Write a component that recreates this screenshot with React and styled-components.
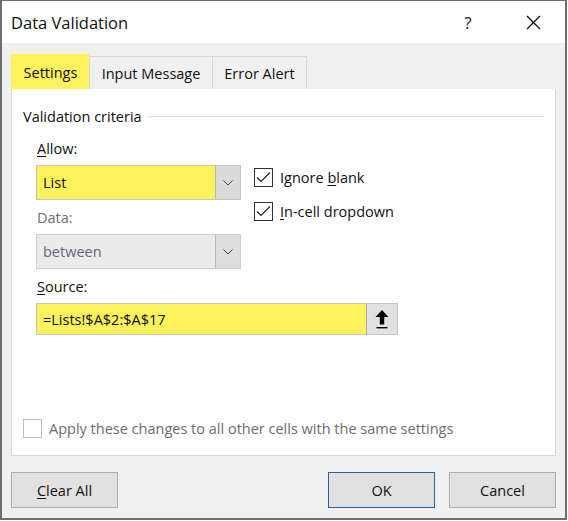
import React from "react";
import styled, { createGlobalStyle } from "styled-components";

const Global = createGlobalStyle`
  html, body { margin: 0; padding: 0; background: #ffffff; }
  body { font-family: "Open Sans", "Noto Sans", sans-serif; color: #111; }
  * { box-sizing: border-box; }
`;

const FONT = `"Open Sans", "Noto Sans", sans-serif`;

const Window = styled.div`
  width: 567px;
  height: 520px;
  border: 2px solid #6e6e6e;
  border-top-width: 1px;
  display: flex;
  flex-direction: column;
  background: #f0f0f0;
  font-family: ${FONT};
`;

const TitleBar = styled.div`
  height: 42px;
  background: #ffffff;
  display: flex;
  align-items: center;
  padding-left: 9px;
  padding-top: 1px;
`;

const Title = styled.div`
  flex: 1;
  font-size: 16.5px;
  color: #111;
`;

const TitleButton = styled.div`
  width: ${(p) => p.$w}px;
  display: flex;
  justify-content: center;
  align-items: center;
  font-size: 17px;
  color: #222;
`;

const Body = styled.div`
  flex: 1;
  display: flex;
  flex-direction: column;
  padding: 11px 9px 0 9px;
`;

const TabList = styled.div`
  display: flex;
  align-items: flex-end;
  height: 35px;
`;

const Tab = styled.div`
  width: ${(p) => p.$w}px;
  height: ${(p) => (p.$active ? 35 : 33)}px;
  display: flex;
  align-items: center;
  justify-content: center;
  font-size: 14.5px;
  color: #111;
  background: ${(p) => (p.$active ? "#fbf25c" : "#f0f0f0")};
  border: 1px solid ${(p) => (p.$active ? "#fbf25c" : "#dadada")};
  border-bottom: none;
  margin-left: ${(p) => (p.$first ? 0 : -1)}px;
`;

const Panel = styled.div`
  height: 367px;
  background: #ffffff;
  border: 1px solid #d9d9d9;
  border-top: none;
  padding: 17px 11px 0 11px;
  display: flex;
  flex-direction: column;
`;

const GroupHeader = styled.div`
  display: flex;
  align-items: center;
  gap: 6px;
  font-size: 14.5px;
  height: 20px;
  color: #111;
`;

const GroupLine = styled.div`
  flex: 1;
  height: 1px;
  background: #dcdcdc;
`;

const Criteria = styled.div`
  padding-left: 13px;
  display: flex;
  flex-direction: column;
`;

const TopRow = styled.div`
  display: flex;
  gap: 13px;
`;

const LeftCol = styled.div`
  width: 205px;
  display: flex;
  flex-direction: column;
`;

const RightCol = styled.div`
  display: flex;
  flex-direction: column;
  padding-top: 42px;
  gap: 15px;
`;

const Label = styled.div`
  font-size: 14.5px;
  height: 20px;
  line-height: 20px;
  margin-top: ${(p) => p.$mt || 0}px;
  margin-bottom: ${(p) => p.$mb || 0}px;
  padding-left: 1px;
  color: ${(p) => (p.$disabled ? "#6d6d6d" : "#111")};
`;

const U = styled.span`
  text-decoration: underline;
  text-underline-offset: 2px;
`;

const Select = styled.div`
  height: 35px;
  display: flex;
  border: 1px solid ${(p) => (p.$disabled ? "#cfcfcf" : "#c4c4c4")};
  background: ${(p) => (p.$highlight ? "#fbf25c" : p.$disabled ? "#ebebeb" : "#fff")};
`;

const SelectValue = styled.div`
  flex: 1;
  display: flex;
  align-items: center;
  padding-left: 6px;
  font-size: 14.5px;
  color: ${(p) => (p.$disabled ? "#66677a" : "#111")};
`;

const SelectButton = styled.div`
  width: 25px;
  display: flex;
  align-items: center;
  justify-content: center;
  background: ${(p) => (p.$disabled ? "#dedede" : "#dadada")};
  border-left: 1px solid #b9b9b9;
`;

const CheckRow = styled.div`
  display: flex;
  align-items: center;
  gap: 7px;
  font-size: 14.5px;
  color: ${(p) => (p.$disabled ? "#6d6d6d" : "#111")};
`;

const Box = styled.div`
  width: 19px;
  height: 19px;
  border: 1px solid ${(p) => (p.$disabled ? "#bdbdbd" : "#333")};
  background: #fff;
  display: flex;
  align-items: center;
  justify-content: center;
`;

const SourceRow = styled.div`
  display: flex;
  width: 362px;
  height: 32px;
  border: 1px solid #c4c4c4;
  background: #fbf25c;
`;

const SourceInput = styled.div`
  flex: 1;
  display: flex;
  align-items: center;
  padding-left: 6px;
  font-size: 14.5px;
  color: #111;
`;

const RefButton = styled.div`
  width: 31px;
  display: flex;
  align-items: center;
  justify-content: center;
  background: #e1e1e1;
  border-left: 1px solid #adadad;
`;

const ApplyRow = styled.div`
  margin-top: auto;
  margin-bottom: 17px;
`;

const Footer = styled.div`
  display: flex;
  padding-top: 16px;
  gap: 14px;
`;

const Button = styled.div`
  width: 107px;
  height: 36px;
  display: flex;
  align-items: center;
  justify-content: center;
  font-size: 14.5px;
  color: #111;
  background: #e1e1e1;
  border: 1px solid ${(p) => (p.$default ? "#2a5f98" : "#adadad")};
  margin-left: ${(p) => (p.$push ? "auto" : "0")};
`;

const Chevron = () => (
  <svg width="10" height="6" viewBox="0 0 10 6">
    <polyline points="0.5,0.5 5,5 9.5,0.5" fill="none" stroke="#444" strokeWidth="1" />
  </svg>
);

const Check = () => (
  <svg width="15" height="13" viewBox="0 0 15 13">
    <polyline points="1,6.5 5,10.5 14,1.5" fill="none" stroke="#222" strokeWidth="1.2" />
  </svg>
);

const UpArrow = () => (
  <svg width="14" height="20" viewBox="0 0 14 20">
    <path d="M7 1 L13.5 8 L9.2 8 L9.2 15.5 L4.8 15.5 L4.8 8 L0.5 8 Z" fill="#000" />
    <rect x="1.5" y="18" width="11" height="1.4" fill="#000" />
  </svg>
);

const Close = () => (
  <svg width="15" height="15" viewBox="0 0 15 15">
    <path d="M1 1 L14 14 M14 1 L1 14" stroke="#111" strokeWidth="1.3" />
  </svg>
);

export default function App() {
  return (
    <>
      <Global />
      <Window>
        <TitleBar>
          <Title>Data Validation</Title>
          <TitleButton $w={66}>?</TitleButton>
          <TitleButton $w={64}>
            <Close />
          </TitleButton>
        </TitleBar>
        <Body>
          <TabList>
            <Tab $active $first $w={79}>Settings</Tab>
            <Tab $w={124}>Input Message</Tab>
            <Tab $w={95}>Error Alert</Tab>
          </TabList>
          <Panel>
            <GroupHeader>
              <span>Validation criteria</span>
              <GroupLine />
            </GroupHeader>
            <Criteria>
              <TopRow>
                <LeftCol>
                  <Label $mt={13} $mb={6}>
                    <U>A</U>llow:
                  </Label>
                  <Select $highlight>
                    <SelectValue>List</SelectValue>
                    <SelectButton>
                      <Chevron />
                    </SelectButton>
                  </Select>
                  <Label $disabled $mt={8} $mb={6}>Data:</Label>
                  <Select $disabled>
                    <SelectValue $disabled>between</SelectValue>
                    <SelectButton $disabled>
                      <Chevron />
                    </SelectButton>
                  </Select>
                </LeftCol>
                <RightCol>
                  <CheckRow>
                    <Box>
                      <Check />
                    </Box>
                    <span>
                      Ignore <U>b</U>lank
                    </span>
                  </CheckRow>
                  <CheckRow>
                    <Box>
                      <Check />
                    </Box>
                    <span>
                      <U>I</U>n-cell dropdown
                    </span>
                  </CheckRow>
                </RightCol>
              </TopRow>
              <Label $mt={8} $mb={6}>
                <U>S</U>ource:
              </Label>
              <SourceRow>
                <SourceInput>=Lists!$A$2:$A$17</SourceInput>
                <RefButton>
                  <UpArrow />
                </RefButton>
              </SourceRow>
            </Criteria>
            <ApplyRow>
              <CheckRow $disabled>
                <Box $disabled />
                <span>Apply these changes to all other cells with the same settings</span>
              </CheckRow>
            </ApplyRow>
          </Panel>
          <Footer>
            <Button>
              <span>
                <U>C</U>lear All
              </span>
            </Button>
            <Button $default $push>OK</Button>
            <Button>Cancel</Button>
          </Footer>
        </Body>
      </Window>
    </>
  );
}
